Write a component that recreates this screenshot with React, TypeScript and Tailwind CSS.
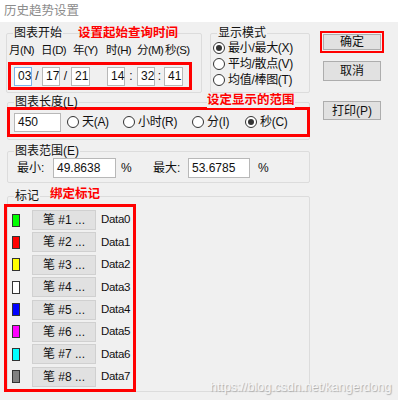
import React from "react";

const FONT = { fontFamily: "'Liberation Sans', 'Noto Sans CJK SC', sans-serif" };

const PENS = [
  { color: "bg-[#00ff00]", name: "Data0" },
  { color: "bg-[#ff0000]", name: "Data1" },
  { color: "bg-[#ffff00]", name: "Data2" },
  { color: "bg-[#ffffff]", name: "Data3" },
  { color: "bg-[#0000ff]", name: "Data4" },
  { color: "bg-[#ff00ff]", name: "Data5" },
  { color: "bg-[#00ffff]", name: "Data6" },
  { color: "bg-[#808080]", name: "Data7" },
];

function Radio({ label, checked }: { label: string; checked?: boolean }) {
  return (
    <span className="flex items-center gap-[3px] whitespace-nowrap">
      <span className="w-[12px] h-[12px] rounded-full border border-[#333] bg-white flex items-center justify-center shrink-0">
        {checked && <span className="w-[6px] h-[6px] rounded-full bg-[#333]" />}
      </span>
      <span className="tracking-[-0.3px]">{label}</span>
    </span>
  );
}

function Box({ value, w, focus }: { value: string; w: string; focus?: boolean }) {
  return (
    <div
      className={`${w} h-[19px] bg-white border ${focus ? "border-[#7eb4ea]" : "border-[#b8b8b8]"} flex items-center px-[3px] text-[12px] text-[#111]`}
    >
      {value}
    </div>
  );
}

function Btn({ label, className = "" }: { label: string; className?: string }) {
  return (
    <div
      className={`w-[58px] bg-[#e1e1e1] border border-[#adadad] flex items-center justify-center text-[12px] text-[#111] ${className}`}
    >
      {label}
    </div>
  );
}

function Note({ text, className }: { text: string; className: string }) {
  return (
    <span className={`absolute text-[12.5px] leading-[15px] font-bold text-[#ff0000] whitespace-nowrap ${className}`}>
      {text}
    </span>
  );
}

export default function App() {
  return (
    <div className="relative w-[398px] h-[400px] bg-[#f0f0f0] overflow-hidden text-[12px] text-[#111]" style={FONT}>
      {/* title bar */}
      <div className="h-[22px] bg-white pl-[4px] leading-[22px] text-[12.5px] text-[#8c8c8c]">历史趋势设置</div>

      <div className="flex">
        {/* left column */}
        <div className="w-[310px] pl-[6px] pt-[5px]">
          <div className="flex">
            {/* 图表开始 */}
            <div className="relative">
              <fieldset className="w-[196px] h-[66px] border border-[#dcdcdc] rounded-[2px] min-w-0">
                <legend className="ml-[6px] px-[1px] leading-[13px]">图表开始</legend>
                <div className="flex h-[14px] mt-[3px] pl-[2px] leading-[14px] whitespace-nowrap text-[11.5px] tracking-[-0.6px]">
                  <span className="w-[32px]">月(N)</span>
                  <span className="w-[32px]">日(D)</span>
                  <span className="w-[33px]">年(Y)</span>
                  <span className="w-[31px]">时(H)</span>
                  <span className="w-[28px]">分(M)</span>
                  <span>秒(S)</span>
                </div>
                <div className="ml-[1px] mt-[5px] w-[184px] h-[28px] border-[3px] border-[#ff0000] flex items-center pl-[3px]">
                  <Box value="03" w="w-[18px]" focus />
                  <span className="w-[10px] text-center">/</span>
                  <Box value="17" w="w-[18px]" />
                  <span className="w-[11px] text-center">/</span>
                  <Box value="21" w="w-[19px]" />
                  <span className="w-[17px]" />
                  <Box value="14" w="w-[18px]" />
                  <span className="w-[12px] text-center">:</span>
                  <Box value="32" w="w-[18px]" />
                  <span className="w-[9px] text-center">:</span>
                  <Box value="41" w="w-[19px]" />
                </div>
              </fieldset>
              <Note text="设置起始查询时间" className="left-[72px] top-[-1px]" />
            </div>

            {/* 显示模式 */}
            <fieldset className="ml-[8px] w-[100px] h-[66px] border border-[#dcdcdc] rounded-[2px] min-w-0">
              <legend className="ml-[6px] px-[1px] leading-[13px]">显示模式</legend>
              <div className="flex flex-col pl-[2px]">
                <div className="h-[16px] flex items-center"><Radio label="最小/最大(X)" checked /></div>
                <div className="h-[16px] flex items-center"><Radio label="平均/散点(V)" /></div>
                <div className="h-[16px] flex items-center"><Radio label="均值/棒图(T)" /></div>
              </div>
            </fieldset>
          </div>

          {/* 图表长度 */}
          <div className="relative ml-[1px] mt-[3px]">
            <fieldset className="w-[303px] h-[44px] border border-[#dcdcdc] rounded-[2px] min-w-0">
              <legend className="ml-[6px] px-[1px] leading-[13px]">图表长度(L)</legend>
              <div className="-mx-[1px] -mt-[2px] h-[30px] border-[3px] border-[#ff0000] flex items-center pl-[4px]">
                <Box value="450" w="w-[47px]" />
                <span className="w-[6px]" />
                <span className="w-[56px]"><Radio label="天(A)" /></span>
                <span className="w-[69px]"><Radio label="小时(R)" /></span>
                <span className="w-[53px]"><Radio label="分(I)" /></span>
                <Radio label="秒(C)" checked />
              </div>
            </fieldset>
            <Note text="设定显示的范围" className="left-[200px] top-[-3px] bg-[#f0f0f0]" />
          </div>

          {/* 图表范围 */}
          <fieldset className="ml-[1px] mt-[5px] w-[303px] h-[38px] border border-[#dcdcdc] rounded-[2px] min-w-0">
            <legend className="ml-[6px] px-[1px] leading-[13px]">图表范围(E)</legend>
            <div className="flex items-center h-[20px] pl-[9px]">
              <span className="w-[36px]">最小:</span>
              <Box value="49.8638" w="w-[63px] h-[20px]" />
              <span className="ml-[5px] w-[32px]">%</span>
              <span className="w-[35px]">最大:</span>
              <Box value="53.6785" w="w-[62px] h-[20px]" />
              <span className="ml-[8px]">%</span>
            </div>
          </fieldset>

          {/* 标记 */}
          <div className="relative ml-[1px] mt-[7px]">
            <fieldset className="w-[303px] h-[202px] border border-[#dcdcdc] rounded-[2px] min-w-0">
              <legend className="ml-[6px] px-[1px] leading-[13px]">标记</legend>
              <div className="-ml-[4px] mt-[1px] w-[132px] h-[188px] border-[3px] border-[#ff0000] pt-[3px] pl-[5px] flex flex-col gap-[2.4px]">
                {PENS.map((p, i) => (
                  <div key={p.name} className="flex items-center h-[20px]">
                    <span className={`w-[8px] h-[13px] border border-[#333] ${p.color}`} />
                    <div className="ml-[12px] w-[64px] h-[20px] bg-[#e1e1e1] border border-[#d0d0d0] flex items-center justify-center whitespace-nowrap">
                      笔 #{i + 1} ...
                    </div>
                    <span className="ml-[5px] text-[11.5px] tracking-[-0.3px]">{p.name}</span>
                  </div>
                ))}
              </div>
            </fieldset>
            <Note text="绑定标记" className="left-[43px] top-[-3px]" />
          </div>
        </div>

        {/* right buttons */}
        <div className="flex flex-col pl-[10px] pt-[9px]">
          <div className="w-[64px] h-[22px] border-2 border-[#ff0000] flex items-center justify-center">
            <Btn label="确定" className="h-[16px] w-[57px]" />
          </div>
          <Btn label="取消" className="mt-[8px] ml-[3px] h-[20px]" />
          <Btn label="打印(P)" className="mt-[20px] ml-[3px] h-[19px]" />
        </div>
      </div>

      <div className="absolute left-[210px] top-[378px] text-[12.5px] text-[#f6f6f6] [text-shadow:1px_1px_1px_#a8a8a8] whitespace-nowrap">
        https://blog.csdn.net/kangerdong
      </div>
    </div>
  );
}
